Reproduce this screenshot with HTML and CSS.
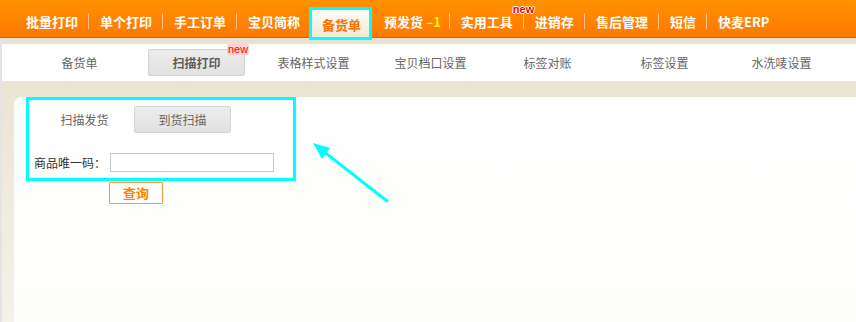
FILE: index.html
```html
<!DOCTYPE html>
<html lang="zh-CN">
<head>
<meta charset="utf-8">
<title>备货单 - 扫描打印</title>
<link rel="stylesheet" href="styles.css">
</head>
<body>
<div class="topbar">
  <span class="nav-item">批量打印</span><span class="sep"></span>
  <span class="nav-item">单个打印</span><span class="sep"></span>
  <span class="nav-item">手工订单</span><span class="sep"></span>
  <span class="nav-item">宝贝简称</span>
  <span class="nav-item active">备货单</span>
  <span class="nav-item pre">预发货<b class="count">–1</b></span><span class="sep"></span>
  <span class="nav-item has-new">实用工具<i class="new">new</i></span><span class="sep"></span>
  <span class="nav-item">进销存</span><span class="sep"></span>
  <span class="nav-item">售后管理</span><span class="sep"></span>
  <span class="nav-item">短信</span><span class="sep"></span>
  <span class="nav-item">快麦ERP</span>
</div>
<div class="lower">
  <div class="subnav">
    <span class="sub-item">备货单</span>
    <span class="sub-item current">扫描打印<i class="new-badge">new</i></span>
    <span class="sub-item">表格样式设置</span>
    <span class="sub-item">宝贝档口设置</span>
    <span class="sub-item">标签对账</span>
    <span class="sub-item">标签设置</span>
    <span class="sub-item">水洗唛设置</span>
  </div>
  <div class="main">
    <div class="panel">
      <div class="scan-box">
        <div class="tabs">
          <span class="tab">扫描发货</span>
          <span class="tab on">到货扫描</span>
        </div>
        <div class="field">
          <label class="field-label">商品唯一码：</label>
          <input class="field-input" type="text">
        </div>
      </div>
      <button class="query" type="button">查询</button>
      <svg class="arrow" width="420" height="150" viewBox="0 0 420 150">
        <line x1="373" y1="104" x2="309" y2="54" stroke="#00ffff" stroke-width="3" stroke-linecap="round"/>
        <polygon points="299,46 316,51 308,62" fill="#00ffff"/>
      </svg>
    </div>
  </div>
</div>
</body>
</html>
```
FILE: styles.css
```css
html, body {
  margin: 0;
  padding: 0;
}
body {
  width: 856px;
  height: 322px;
  overflow: hidden;
  background: #e8e1cf;
  font-family: "Noto Sans CJK SC", "Liberation Sans", sans-serif;
}

.topbar {
  box-sizing: border-box;
  height: 38px;
  padding: 5px 0 0 26px;
  display: flex;
  align-items: center;
  background: linear-gradient(#ff9100, #ff7800);
  border-bottom: 1px solid #f15300;
  position: relative;
  z-index: 2;
}
.nav-item {
  position: relative;
  color: #fff;
  font-size: 13px;
  font-weight: bold;
  line-height: 13px;
  white-space: nowrap;
}
.sep {
  width: 1px;
  height: 16px;
  margin: 0 11px 0 10px;
  background: #ffc48a;
}
.nav-item.active {
  align-self: flex-start;
  box-sizing: border-box;
  height: 33px;
  margin: 2px 12px 0 9px;
  padding: 2px 8px 0 10px;
  display: flex;
  align-items: center;
  border: 3px solid #00ffff;
  background: linear-gradient(#fffefa, #efe8d5);
  color: #ff7300;
}
.count {
  margin-left: 3px;
  color: #ffff00;
  font-weight: bold;
}
.pre + .sep {
  margin-left: 8px;
}
.new {
  position: absolute;
  left: 52px;
  top: -11px;
  color: #f00000;
  font-family: "Liberation Sans", sans-serif;
  font-style: normal;
  font-weight: bold;
  font-size: 11px;
  line-height: 11px;
  text-shadow: 1px 0 0 #fff, -1px 0 0 #fff, 0 1px 0 #fff, 0 -1px 0 #fff;
}

.lower {
  box-sizing: border-box;
  height: 284px;
  padding-top: 6px;
  border-left: 2px solid #e4e4e8;
  background: linear-gradient(#e8e1cf, #f5f2ea);
}
.subnav {
  height: 37px;
  padding-left: 19px;
  display: grid;
  grid-template-columns: repeat(7, 117px);
  align-items: center;
  justify-items: center;
  background: #fff;
}
.sub-item {
  position: relative;
  color: #666;
  font-size: 12px;
  line-height: 12px;
  white-space: nowrap;
}
.sub-item.current {
  box-sizing: border-box;
  width: 97px;
  height: 27px;
  display: flex;
  align-items: center;
  justify-content: center;
  border: 1px solid #d3d3d3;
  border-radius: 2px;
  background: linear-gradient(#ececec, #e1e1e1);
  color: #5e5e5e;
  font-weight: bold;
}
.new-badge {
  position: absolute;
  left: 78px;
  top: -6px;
  padding: 0 1px;
  color: #ff0000;
  font-family: "Liberation Sans", sans-serif;
  font-style: normal;
  font-weight: normal;
  font-size: 11px;
  line-height: 11px;
  background: rgba(255, 200, 200, 0.8);
  border-radius: 2px;
}

.main {
  padding: 10px 0 0 12px;
}
.panel {
  position: relative;
  height: 231px;
  background: linear-gradient(#ffffff, #fdfdfb);
  border-top-left-radius: 8px;
}
.scan-box {
  box-sizing: border-box;
  width: 270px;
  height: 84px;
  margin: 6px 0 0 12px;
  padding: 6px 0 0 5px;
  border: 3px solid #00ffff;
}
.tabs {
  display: flex;
  gap: 1px;
  margin-left: 2px;
}
.tab {
  box-sizing: border-box;
  width: 97px;
  height: 27px;
  display: flex;
  align-items: center;
  justify-content: center;
  color: #666;
  font-size: 12px;
}
.tab.on {
  border: 1px solid #d3d3d3;
  border-radius: 2px;
  background: linear-gradient(#ececec, #e2e2e2);
}
.field {
  display: flex;
  align-items: center;
  margin-top: 20px;
}
.field-label {
  width: 76px;
  color: #333;
  font-size: 12px;
  white-space: nowrap;
}
.field-input {
  box-sizing: border-box;
  width: 164px;
  height: 19px;
  margin: 0;
  padding: 0 3px;
  border: 1px solid #c8c8c8;
  background: #fff;
}
.query {
  display: block;
  box-sizing: border-box;
  width: 54px;
  height: 22px;
  margin: 1px 0 0 95px;
  padding: 0;
  border: 1px solid #ff9a33;
  border-radius: 1px;
  background: #fff;
  color: #ff8200;
  font-family: "Noto Sans CJK SC", sans-serif;
  font-size: 13px;
  font-weight: bold;
  line-height: 20px;
}
.arrow {
  position: absolute;
  left: 0;
  top: 0;
  pointer-events: none;
}
```
